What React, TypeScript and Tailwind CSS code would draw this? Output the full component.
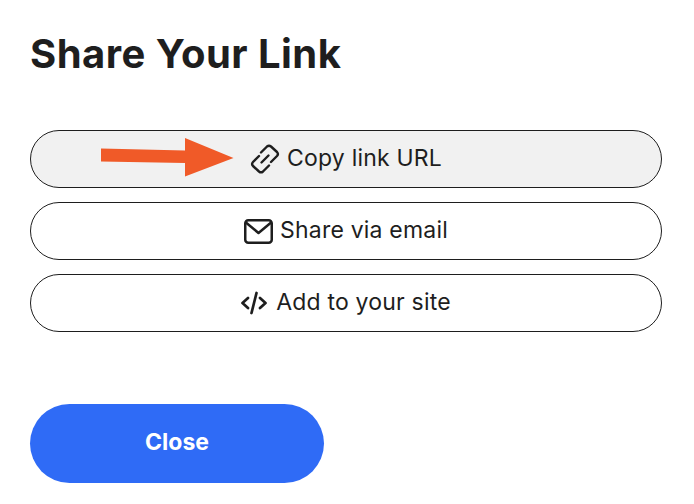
export default function App() {
  return (
    <div className="relative w-[694px] h-[504px] bg-white px-[30px] pt-[31px] text-[#1e1e1e] font-['Inter','Liberation_Sans',sans-serif] overflow-hidden">
      <h1 className="text-[40px] leading-[46px] font-bold tracking-[0.45px]">Share Your Link</h1>
      <div className="mt-[53px] flex flex-col gap-[14px] w-[632px]">
        <button className="h-[58px] rounded-[29px] border border-[#1e1e1e] bg-[#f1f1f1] flex items-center justify-center gap-[7px] text-[23px] leading-none tracking-[0.2px]">
          <svg width="30" height="30" viewBox="5 5 30 30" fill="none" stroke="#1e1e1e" strokeWidth="2.4" strokeLinecap="round" strokeLinejoin="round"><path d="M16 13.500L22 7.500Q24 5.800 26 7.500L32 13Q33.800 15 32 17L26 23" /><path d="M24 26.500L18 32.500Q16 34.200 14 32.500L8 27Q6.200 25 8 23L14 17" /><path d="M16.500 23.500L23.500 16.500" /></svg>
          <span className="pb-[2px]">Copy link URL</span>
        </button>
        <button className="h-[58px] rounded-[29px] border border-[#1e1e1e] bg-white flex items-center justify-center gap-[7px] text-[23px] leading-none tracking-[0.2px]">
          <svg width="29" height="25" viewBox="0 0 29 25" fill="none" stroke="#1e1e1e" strokeWidth="2.5" strokeLinecap="round" strokeLinejoin="round"><rect x="1.250" y="1.250" width="26.500" height="22.500" rx="3" /><path d="M2.500 4L14.500 14 26.500 4" /></svg>
          <span className="pb-[2px]">Share via email</span>
        </button>
        <button className="h-[58px] rounded-[29px] border border-[#1e1e1e] bg-white flex items-center justify-center gap-[9px] text-[23px] leading-none tracking-[0.2px]">
          <svg width="26" height="24" viewBox="0 0 26 24" fill="none" stroke="#1e1e1e" strokeWidth="2.7" strokeLinecap="round" strokeLinejoin="round"><path d="M7 7L1.500 12 7 17" /><path d="M19 7l5.500 5L19 17" /><path d="M15.500 2L10.500 22" /></svg>
          <span className="pb-[2px]">Add to your site</span>
        </button>
      </div>
      <button className="mt-[72px] w-[294px] h-[79px] rounded-[40px] bg-[#2f6bf6] text-white text-[23px] font-bold pb-[2px]">Close</button>
      <svg className="absolute left-[101px] top-[138px]" width="133" height="39" viewBox="0 0 133 39"><path d="M0 10.500L84 12.500V0L132.500 20 84 38.500V25L0 23.500Z" fill="#f05a28" /></svg>
    </div>
  );
}
